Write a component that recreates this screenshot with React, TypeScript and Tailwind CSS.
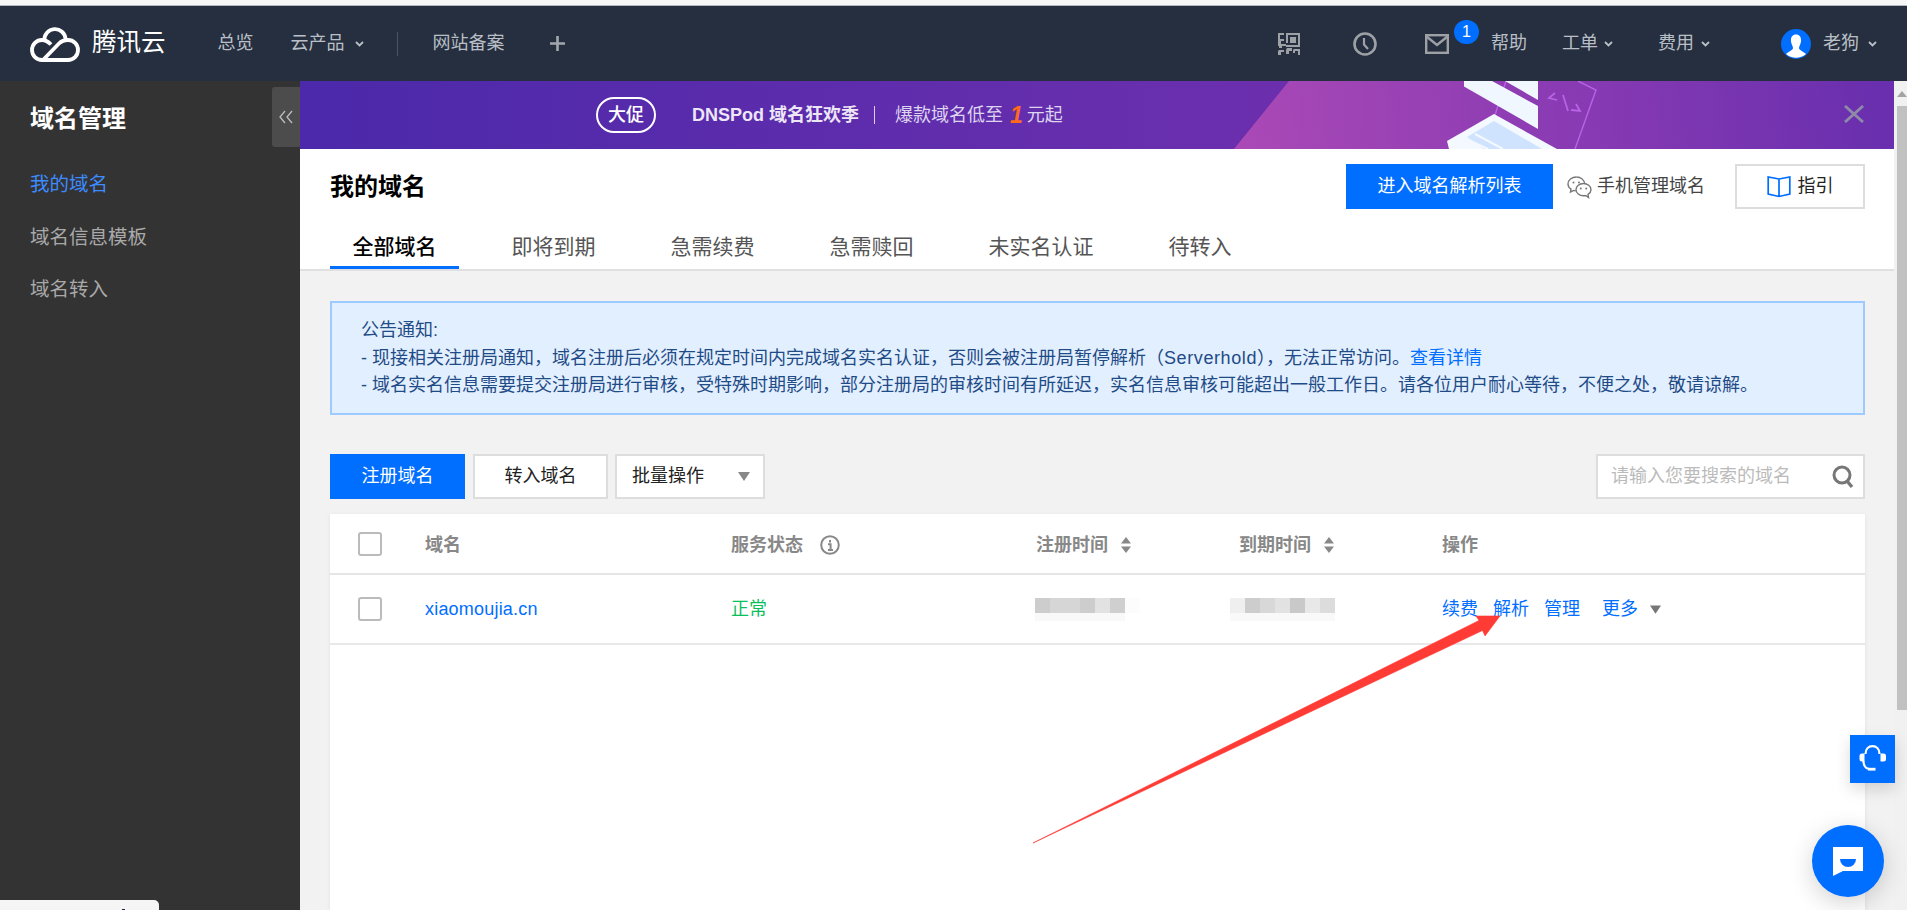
import React from "react";

const Caret = ({ className = "" }: { className?: string }) => (
  <svg width="9" height="6" viewBox="0 0 9 6" className={className}>
    <path d="M1 1 L4.5 4.5 L8 1" fill="none" stroke="currentColor" strokeWidth="1.8" />
  </svg>
);

const Tri = ({ w = 12, h = 9, color = "#888888" }: { w?: number; h?: number; color?: string }) => (
  <svg width={w} height={h} viewBox="0 0 12 9">
    <path d="M0 0 H12 L6 9 Z" fill={color} />
  </svg>
);

const Sort = () => (
  <svg width="12" height="16" viewBox="0 0 12 16">
    <path d="M6 0 L11 6.5 H1 Z M6 16 L1 9.5 H11 Z" fill="#888888" />
  </svg>
);

const Checkbox = () => <div className="w-6 h-6 border-2 border-[#bbbbbb] rounded-[3px] bg-white" />;

const tabs = ["全部域名", "即将到期", "急需续费", "急需赎回", "未实名认证", "待转入"];

const mosaicA = ["bg-[#cdcdcd]", "bg-[#d6d6d6]", "bg-[#d6d6d6]", "bg-[#cdcdcd]", "bg-[#e2e2e2]", "bg-[#cfcfcf]", "bg-[#fcfcfc]"];
const mosaicB = ["bg-[#efefef]", "bg-[#cdcdcd]", "bg-[#d8d8d8]", "bg-[#e2e2e2]", "bg-[#c9c9c9]", "bg-[#e8e8e8]", "bg-[#dcdcdc]"];

const Mosaic = ({ cells, faint }: { cells: string[]; faint: string }) => (
  <div className="flex flex-col">
    <div className="flex">
      {cells.map((c, i) => (
        <div key={i} className={`w-[15px] h-[15px] ${c}`} />
      ))}
    </div>
    <div className={`h-[8px] bg-[#f9f9f9] ${faint}`} />
  </div>
);

export default function App() {
  return (
    <div className="relative w-[1907px] h-[910px] overflow-hidden flex flex-col bg-[#f2f2f2] font-['Liberation_Sans','Noto_Sans_CJK_SC',sans-serif]">
      {/* browser strip */}
      <div className="h-[6px] shrink-0 bg-[#f7f7f7] border-b border-[#b4b8bd]" />

      {/* top nav */}
      <header className="h-[75px] shrink-0 bg-[#262f3f] flex items-center pl-[30px] text-[18px] text-[#b9bfc6]">
        <svg width="50" height="36" viewBox="0 0 50 36" className="shrink-0">
          <path
            d="M14.4 14.5 A10.6 10.6 0 0 1 35.6 13 M24 34 H12 A10 10 0 1 1 12 14 C15.5 14 18 15.5 21 18.5 M13 34 L29 17.5 C31.5 15 34.5 14 38 14 A10 10 0 1 1 38 34 H24"
            fill="none"
            stroke="#ffffff"
            strokeWidth="3.8"
          />
        </svg>
        <span className="ml-[12px] text-[24.5px] text-white leading-none">腾讯云</span>
        <span className="ml-[52px]">总览</span>
        <span className="ml-[37px]">云产品</span>
        <Caret className="ml-[10px]" />
        <div className="ml-[33px] w-px h-[24px] bg-[#4b5462]" />
        <span className="ml-[35px]">网站备案</span>
        <svg width="15" height="15" viewBox="0 0 15 15" className="ml-[45px]">
          <path d="M7.5 0 V15 M0 7.5 H15" stroke="#a3a8ae" strokeWidth="2.6" />
        </svg>

        <div className="ml-auto flex items-center">
          <svg width="22" height="22" viewBox="0 0 22 22" className="shrink-0">
            <path
              d="M0 0 H6 V2 H2 V6 H6 V8 H3 V11 H8 V13 H4 V15 H1 V13 H0 Z M8 0 H22 V14 H8 V12 H20 V2 H10 V10 H8 Z M12 4 H18 V10 H12 Z M1 17 H6 V19 H3 V22 H0 V18 Z M9 15 H14 V18 H11 V21 H8 V17 Z M16 16 H22 V22 H20 V18 H17 V20 H15 V17 Z"
              fill="#9da1a6"
              fillRule="evenodd"
            />
          </svg>
          <svg width="24" height="24" viewBox="0 0 24 24" className="ml-[53px] shrink-0">
            <circle cx="12" cy="12" r="10.5" fill="none" stroke="#9da1a6" strokeWidth="2.6" />
            <path d="M11 6 V12.5 L15 17" fill="none" stroke="#9da1a6" strokeWidth="2.2" />
          </svg>
          <div className="relative ml-[48px] w-[24px] h-[20px] mr-[42px]">
            <svg width="24" height="20" viewBox="0 0 24 20" className="absolute left-0 top-0">
              <rect x="1.2" y="1.2" width="21.6" height="17.6" fill="none" stroke="#9da1a6" strokeWidth="2.4" />
              <path d="M1.5 2.5 L12 11 L22.5 2.5" fill="none" stroke="#9da1a6" strokeWidth="2.4" />
            </svg>
            <div className="absolute left-[29px] top-[-14px] w-[25px] h-[24px] rounded-full bg-[#006eff] text-white text-[16px] leading-[24px] text-center">
              1
            </div>
          </div>
          <span>帮助</span>
          <span className="ml-[35px]">工单</span>
          <Caret className="ml-[6px]" />
          <span className="ml-[45px]">费用</span>
          <Caret className="ml-[7px]" />
          <div className="ml-[71px] w-[30px] h-[30px] rounded-full bg-[#006eff] overflow-hidden shrink-0">
            <svg width="30" height="30" viewBox="0 0 30 30">
              <path d="M15 5.5 C19 5.5 20.5 9 20 12.5 C19.6 15.5 18 17.5 18 19 C18 21 22 22.5 25 25 A15 15 0 0 1 5 25 C8 22.5 12 21 12 19 C12 17.5 10.4 15.5 10 12.5 C9.5 9 11 5.5 15 5.5 Z" fill="#ffffff" />
            </svg>
          </div>
          <span className="ml-[12px]">老狗</span>
          <Caret className="ml-[9px] mr-[30px]" />
        </div>
      </header>

      <div className="flex flex-1 min-h-0">
        {/* sidebar */}
        <aside className="relative w-[300px] shrink-0 bg-[#333333] pl-[30px] pt-[21px]">
          <div className="text-[24px] leading-[34px] font-bold text-white">域名管理</div>
          <nav className="mt-[22px] flex flex-col text-[19.5px] text-[#a9a9a9]">
            <div className="h-[52.5px] leading-[52px] text-[#3d8bff]">我的域名</div>
            <div className="h-[52.5px] leading-[52px]">域名信息模板</div>
            <div className="h-[52.5px] leading-[52px]">域名转入</div>
          </nav>
          <div className="absolute right-0 top-[6px] w-[28px] h-[60px] bg-[#4c4c4c] rounded-l-[3px] flex items-center justify-center">
            <svg width="14" height="14" viewBox="0 0 14 14">
              <path d="M6 1 L1 7 L6 13 M13 1 L8 7 L13 13" fill="none" stroke="#bdbdbd" strokeWidth="1.3" />
            </svg>
          </div>
        </aside>

        {/* main */}
        <main className="flex-1 min-w-0 flex flex-col">
          {/* banner */}
          <div className="relative h-[68px] shrink-0 overflow-hidden bg-[linear-gradient(90deg,#4b29aa,#6b2fae_60%)] flex items-center text-white">
            <svg width="1594" height="68" viewBox="300 81 1594 68" className="absolute left-0 top-0">
              <defs>
                <linearGradient id="pk" x1="1240" y1="149" x2="1880" y2="81" gradientUnits="userSpaceOnUse">
                  <stop offset="0" stopColor="#aa49b6" />
                  <stop offset="0.5" stopColor="#8a3bb3" />
                  <stop offset="1" stopColor="#692fae" />
                </linearGradient>
              </defs>
              <path d="M1289 81 H1894 V149 H1234 Z" fill="url(#pk)" />
              <path d="M1506 81 L1495 115 M1578 81 L1596 90 L1575 149" fill="none" stroke="#b863e6" strokeWidth="1.4" />
              <path d="M1464 81 H1492 L1538 106 V129 L1464 86.5 Z M1505 81 H1538 V100 Z" fill="#f1f7ff" />
              <path d="M1447 141 L1494 114 L1557 149 H1449 Z" fill="#f4f8ff" />
              <path d="M1467 137 L1494 121 L1542 149 H1484 Z" fill="#cfe3ff" />
              <path d="M1466 139 L1488 149 M1475 134 L1503 149" stroke="#f4f8ff" strokeWidth="2" />
              <path d="M1555 93 L1549 98 L1557 100 M1563 95 L1568 111 M1576 104 L1580 111 L1571 110" fill="none" stroke="#b863e6" strokeWidth="1.8" />
            </svg>
            <div className="relative ml-[296px] w-[60px] h-[36px] rounded-full border-2 border-white flex items-center justify-center text-[18px] font-medium">
              大促
            </div>
            <span className="relative ml-[36px] text-[18px] font-bold text-[#ece6f6] whitespace-nowrap">DNSPod 域名狂欢季</span>
            <div className="relative ml-[15px] w-px h-[18px] bg-[#d9cfee]" />
            <span className="relative ml-[20px] text-[18px] text-[#ddd4f0] whitespace-nowrap">爆款域名低至</span>
            <span className="relative ml-[7px] text-[23px] leading-none italic font-bold text-[#ff6a1a]">1</span>
            <span className="relative ml-[4px] text-[18px] text-[#ddd4f0] whitespace-nowrap">元起</span>
            <svg width="20" height="18" viewBox="0 0 20 18" className="absolute left-[1544px] top-[24px]">
              <path d="M1 1 L19 17 M19 1 L1 17" stroke="#8f8aa8" strokeWidth="2.8" />
            </svg>
          </div>

          {/* page head */}
          <div className="h-[122px] shrink-0 bg-white flex flex-col">
            <div className="h-[60px] pt-[15px] pl-[30px] pr-[29px] flex items-start">
              <div className="text-[24px] leading-[45px] font-bold text-black">我的域名</div>
              <div className="ml-auto flex items-center h-[45px]">
                <div className="w-[207px] h-[45px] bg-[#006eff] text-white text-[18px] flex items-center justify-center">
                  进入域名解析列表
                </div>
                <svg width="25" height="24" viewBox="0 0 25 24" className="ml-[14px]">
                  <path d="M9.5 2 C4.8 2 1 5 1 9 C1 11.2 2.2 13 4 14.2 L3.5 17 L6.8 15.4 C7.5 15.6 8 15.7 8.6 15.7" fill="none" stroke="#777777" strokeWidth="1.4" />
                  <path d="M18 9.5 C17.3 5 13.8 2 9.5 2" fill="none" stroke="#777777" strokeWidth="1.4" />
                  <circle cx="6.5" cy="7.5" r="1" fill="#777777" />
                  <circle cx="12" cy="7.5" r="1" fill="#777777" />
                  <path d="M16.5 8.5 C12.5 8.5 9 11.2 9 14.7 C9 18.2 12.5 20.8 16.5 20.8 C17.3 20.8 18 20.7 18.7 20.5 L21.5 22.5 L21 19.3 C22.8 18.1 24 16.5 24 14.7 C24 11.2 20.5 8.5 16.5 8.5 Z" fill="#ffffff" stroke="#777777" strokeWidth="1.4" />
                  <circle cx="13.8" cy="13.5" r="1" fill="#777777" />
                  <circle cx="19.2" cy="13.5" r="1" fill="#777777" />
                </svg>
                <span className="ml-[5px] text-[18px] text-[#444444]">手机管理域名</span>
                <div className="ml-[30px] w-[130px] h-[45px] border-2 border-[#dddddd] bg-white flex items-center justify-center text-[18px] text-[#222222]">
                  <svg width="24" height="22" viewBox="0 0 24 22" className="mr-[7px]">
                    <path d="M12 3 L1.2 1 V18 L12 20.5 L22.8 18 V1 Z M12 3 V20.5" fill="none" stroke="#006eff" strokeWidth="1.7" />
                  </svg>
                  指引
                </div>
              </div>
            </div>
            <div className="h-[62px] pl-[30px] border-b-2 border-[#e0e0e0] flex items-end gap-[30px]">
              {tabs.map((t, i) => (
                <div
                  key={t}
                  className={
                    i === 0
                      ? "px-[22.5px] pt-[6px] leading-[38px] text-[21px] font-medium text-black border-b-[3px] border-[#006eff]"
                      : "px-[22.5px] pt-[6px] leading-[38px] text-[21px] text-[#555555] border-b-[3px] border-transparent"
                  }
                >
                  {t}
                </div>
              ))}
            </div>
          </div>

          {/* content */}
          <div className="flex-1 min-h-0 pl-[30px] pr-[29px] pt-[30px] flex flex-col">
            <div className="h-[114px] shrink-0 border-2 border-[#9ecbff] bg-[#e2efff] pl-[29px] pt-[14px] text-[18px] leading-[27.5px] text-[#1f4b86] whitespace-nowrap">
              <div>公告通知:</div>
              <div>
                - 现接相关注册局通知，域名注册后必须在规定时间内完成域名实名认证，否则会被注册局暂停解析（
                <span className="tracking-[0.6px]">Serverhold</span>
                ），无法正常访问。
                <span className="text-[#006eff]">查看详情</span>
              </div>
              <div>- 域名实名信息需要提交注册局进行审核，受特殊时期影响，部分注册局的审核时间有所延迟，实名信息审核可能超出一般工作日。请各位用户耐心等待，不便之处，敬请谅解。</div>
            </div>

            <div className="mt-[39px] h-[45px] shrink-0 flex text-[18px]">
              <div className="w-[135px] bg-[#006eff] text-white flex items-center justify-center">注册域名</div>
              <div className="ml-[8px] w-[135px] border-2 border-[#dddddd] bg-white text-[#222222] flex items-center justify-center">转入域名</div>
              <div className="ml-[7px] w-[150px] border-2 border-[#dddddd] bg-white text-[#222222] flex items-center pl-[15px]">
                批量操作
                <span className="ml-[34px] flex">
                  <Tri color="#888888" />
                </span>
              </div>
              <div className="ml-auto w-[269px] border-2 border-[#dddddd] bg-white flex items-center pl-[13px] text-[#bbbbbb]">
                请输入您要搜索的域名
                <svg width="22" height="24" viewBox="0 0 22 24" className="ml-auto mr-[9px]">
                  <circle cx="10" cy="10" r="8" fill="none" stroke="#777777" strokeWidth="3" />
                  <path d="M15 16 L20 22" stroke="#777777" strokeWidth="3.4" />
                </svg>
              </div>
            </div>

            <div className="mt-[15px] flex-1 min-h-0 bg-white shadow-[0_1px_4px_rgba(0,0,0,0.08)]">
              <div className="h-[61px] border-b-2 border-[#e5e5e5] grid grid-cols-[95px_306px_305px_203px_203px_1fr] items-center text-[18px] font-bold text-[#888888]">
                <div className="pl-[28px]">
                  <Checkbox />
                </div>
                <div className="mt-[3px]">域名</div>
                <div className="mt-[3px] flex items-center">
                  服务状态
                  <svg width="20" height="20" viewBox="0 0 20 20" className="ml-[17px]">
                    <circle cx="10" cy="10" r="8.8" fill="none" stroke="#888888" strokeWidth="2" />
                    <path d="M10 5 V7.4 M8 9.2 H10.6 V15 M8 15 H13" fill="none" stroke="#888888" strokeWidth="2" />
                  </svg>
                </div>
                <div className="mt-[3px] flex items-center">
                  注册时间
                  <span className="ml-[12px] flex">
                    <Sort />
                  </span>
                </div>
                <div className="mt-[3px] flex items-center">
                  到期时间
                  <span className="ml-[12px] flex">
                    <Sort />
                  </span>
                </div>
                <div className="mt-[3px]">操作</div>
              </div>
              <div className="h-[70px] border-b-2 border-[#e8e8e8] grid grid-cols-[95px_306px_305px_203px_203px_1fr] items-center text-[18px]">
                <div className="pl-[28px]">
                  <Checkbox />
                </div>
                <div className="text-[#006eff] tracking-[0.2px]">xiaomoujia.cn</div>
                <div className="text-[#0abf5b]">正常</div>
                <div className="-ml-[1px]">
                  <Mosaic cells={mosaicA} faint="w-[90px]" />
                </div>
                <div className="-ml-[9px]">
                  <Mosaic cells={mosaicB} faint="w-[105px]" />
                </div>
                <div className="flex items-center text-[#006eff]">
                  <span>续费</span>
                  <span className="ml-[15px]">解析</span>
                  <span className="ml-[15px]">管理</span>
                  <span className="ml-[22px]">更多</span>
                  <span className="ml-[12px] flex">
                    <Tri w={11} h={9} color="#777777" />
                  </span>
                </div>
              </div>
            </div>
          </div>
        </main>

        {/* scrollbar */}
        <div className="w-[13px] shrink-0 bg-[#f1f1f1] pl-[3px]">
          <div className="h-[25px] flex items-center justify-center">
            <svg width="10" height="6" viewBox="0 0 10 6">
              <path d="M5 0 L10 6 H0 Z" fill="#a3a3a3" />
            </svg>
          </div>
          <div className="h-[604px] bg-[#c1c1c1]" />
        </div>
      </div>

      {/* annotation arrow */}
      <svg width="1907" height="910" viewBox="0 0 1907 910" className="absolute left-0 top-0 pointer-events-none">
        <path d="M1033 843 L1479 620.5 L1476 616 L1500 616 L1485 636 L1482.5 630.5 Z" fill="#ff3b36" stroke="#ff3b36" strokeWidth="0.6" />
      </svg>

      {/* floating widgets */}
      <div className="absolute left-[1850px] top-[735px] w-[45px] h-[48px] bg-[#006eff] shadow-[0_6px_16px_rgba(0,0,0,0.15)] flex items-center justify-center">
        <svg width="28" height="28" viewBox="0 0 28 28">
          <path d="M6.5 9 C6.5 4 9.5 1.2 13.5 1.2 C17.5 1.2 20.5 4 20.5 9" fill="none" stroke="#ffffff" strokeWidth="2.2" />
          <path d="M4.5 16 C4.5 20 6.5 23.5 10 24" fill="none" stroke="#ffffff" strokeWidth="2.2" />
          <path d="M9 24.2 H16.5" stroke="#ffffff" strokeWidth="2.8" />
          <path d="M0.5 11 A2.5 2.5 0 0 1 3 8.5 H5.5 V16.5 H3 A2.5 2.5 0 0 1 0.5 14 Z" fill="#ffffff" />
          <path d="M21.5 8.5 H24.5 A2.5 2.5 0 0 1 27 11 V14 A2.5 2.5 0 0 1 24.5 16.5 H21.5 Z" fill="#ffffff" />
        </svg>
      </div>
      <div className="absolute left-[1812px] top-[825px] w-[72px] h-[72px] rounded-full bg-[#006eff] shadow-[0_6px_24px_rgba(0,0,0,0.18)] flex items-center justify-center">
        <svg width="30" height="29" viewBox="0 0 30 29">
          <path d="M0 0 H30 V24 H10 L0 29 Z" fill="#ffffff" />
          <path d="M7 12 H23 A8 8 0 0 1 7 12 Z" fill="#006eff" />
        </svg>
      </div>
      <div className="absolute left-0 top-[900px] w-[159px] h-[10px] bg-[#f5f5f5] rounded-tr-[5px]">
        <div className="absolute left-[122px] bottom-0 w-[3px] h-[1px] bg-[#222244]" />
      </div>
    </div>
  );
}
